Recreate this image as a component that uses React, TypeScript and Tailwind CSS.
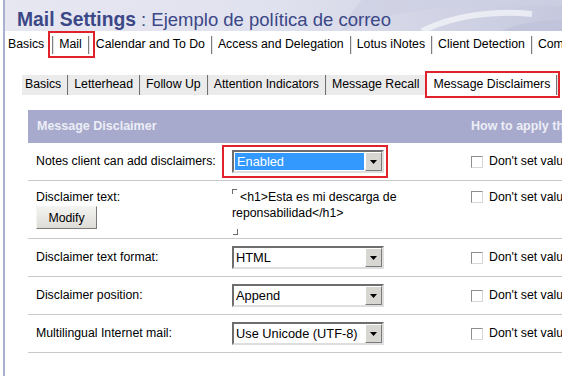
import React from "react";

const Sep = ({ tall }: { tall?: boolean }) => (
  <span
    className={
      tall
        ? "h-[20px] w-[2px] shrink-0 border-l border-[#6f6f6f] bg-[#e4e4e4]"
        : "h-[18px] w-[2px] shrink-0 border-l border-[#7d7d7d] bg-[#e4e4e4]"
    }
  />
);

const Arrow = () => (
  <svg width="7" height="4" viewBox="0 0 7 4">
    <path d="M0 0h7L3.5 4z" fill="#000" />
  </svg>
);

const Select = ({ value, focused }: { value: string; focused?: boolean }) => (
  <div className="flex h-[23px] w-[152px] border-2 border-t-[#6e6e6e] border-l-[#6e6e6e] border-b-[#dedede] border-r-[#dedede] bg-white">
    <div className="flex min-w-0 flex-1 items-center p-px">
      {focused ? (
        <span className="flex h-full w-full items-center bg-[#3399ff] pl-[2px] text-white">{value}</span>
      ) : (
        <span className="pl-px">{value}</span>
      )}
    </div>
    <div className="flex w-[17px] items-center justify-center border border-t-white border-l-white border-b-[#7a7a7a] border-r-[#7a7a7a] bg-[#d8d6d0]">
      <Arrow />
    </div>
  </div>
);

const Check = ({ text }: { text: string }) => (
  <div className="flex items-center whitespace-nowrap">
    <span className="h-[12px] w-[12px] shrink-0 border border-t-[#8e8e8e] border-l-[#8e8e8e] border-b-[#d6d6d6] border-r-[#d6d6d6] bg-white" />
    <span className="ml-[6px]">{text}</span>
  </div>
);

const topTabs = ["Calendar and To Do", "Access and Delegation", "Lotus iNotes", "Client Detection", "Comments"];
const subTabs = ["Letterhead", "Follow Up", "Attention Indicators", "Message Recall"];

const simpleRows = [
  { label: "Disclaimer text format:", value: "HTML" },
  { label: "Disclaimer position:", value: "Append" },
  { label: "Multilingual Internet mail:", value: "Use Unicode (UTF-8)" },
];

export default function App() {
  return (
    <div className="h-[376px] w-[562px] overflow-hidden bg-white font-['Liberation_Sans',Arial,sans-serif] text-[12.3px] text-black">
      <div className="ml-[3px] h-full border-l-2 border-[#aab1cf]">
        {/* title band */}
        <div className="relative flex h-[31px] items-end overflow-hidden bg-gradient-to-r from-[#e6e7f1] via-[#e0e1ee] to-[#c6c9de] pb-[2px] pl-[12px] leading-none text-[#3b4786]">
          <svg className="absolute right-0 top-0" width="260" height="31" viewBox="0 0 260 31">
            <path d="M40 31C90 10 150 2 260 6V0H60C50 10 45 20 40 31z" fill="#cdd0e3" opacity="0.7" />
            <path d="M120 31C150 16 190 10 230 14" stroke="#f1f2f8" strokeWidth="6" fill="none" opacity="0.8" />
            <path d="M200 31C215 24 235 20 260 20V31z" fill="#bfc2d9" opacity="0.8" />
          </svg>
          <span className="relative whitespace-nowrap">
            <span className="text-[19.3px] font-bold">Mail Settings</span>
            <span className="text-[18.5px]"> : Ejemplo de política de correo</span>
          </span>
        </div>

        {/* top tabs */}
        <div className="flex h-[27px] items-center whitespace-nowrap pl-[3px]">
          <span>Basics</span>
          <span className="ml-[4px] flex h-full items-center border-2 border-[#e0232b] pl-[2px] pr-[3px]">
            <Sep />
            <span className="ml-[5px] mr-[6px]">Mail</span>
            <Sep />
          </span>
          {topTabs.map((t, i) => (
            <React.Fragment key={t}>
              {i > 0 && (
                <span className="ml-[6px] mr-[5px] flex">
                  <Sep />
                </span>
              )}
              <span className={i === 0 ? "ml-px" : ""}>{t}</span>
            </React.Fragment>
          ))}
        </div>

        {/* sub tabs */}
        <div className="mt-[13px] flex h-[27px] items-center whitespace-nowrap pl-[17px]">
          <div className="flex h-[20px] items-center bg-[#ebebeb] pl-[3px] pr-[6px]">
            <span>Basics</span>
            {subTabs.map((t) => (
              <React.Fragment key={t}>
                <span className="ml-[6px] mr-[5px] flex">
                  <Sep tall />
                </span>
                <span>{t}</span>
              </React.Fragment>
            ))}
          </div>
          <div className="flex h-full items-center border-2 border-[#e0232b] bg-white pl-[6px]">
            <span>Message Disclaimers</span>
            <span className="ml-[6px] flex">
              <Sep tall />
            </span>
          </div>
        </div>

        {/* table */}
        <div className="ml-[23px] mt-[12px]">
          <div className="grid h-[33px] grid-cols-[204px_239px_1fr] items-center whitespace-nowrap bg-[#a8aacd] text-[12.5px] font-bold text-[#eceef6]">
            <span className="pl-[9px]">Message Disclaimer</span>
            <span />
            <span>How to apply this setting:</span>
          </div>

          <div className="grid h-[38px] grid-cols-[204px_239px_1fr] items-center border-b border-[#c9c9c9]">
            <span className="pl-[8px]">Notes client can add disclaimers:</span>
            <div className="-ml-[10px] w-fit border-2 border-[#e0232b] py-[3px] pl-[8px] pr-[2px] text-[12.8px]">
              <Select value="Enabled" focused />
            </div>
            <Check text="Don't set value" />
          </div>

          <div className="grid h-[58px] grid-cols-[204px_239px_1fr] items-start border-b border-[#c9c9c9] pt-[8px] leading-[16px]">
            <div className="pl-[8px]">
              <div>Disclaimer text:</div>
              <button className="mt-px h-[23px] w-[61px] border border-t-[#f4f4f4] border-l-[#f4f4f4] border-b-[#7b7b7b] border-r-[#7b7b7b] bg-gradient-to-b from-[#f3f3f1] to-[#dedcd6] text-[12.3px]">
                Modify
              </button>
            </div>
            <div>
              <div className="whitespace-nowrap">
                <span className="inline-block h-[5px] w-[5px] border-l border-t border-[#6a6a6a] align-top" />
                <span className="ml-[3px]">&lt;h1&gt;Esta es mi descarga de</span>
              </div>
              <div>reponsabilidad&lt;/h1&gt;</div>
              <div className="flex h-[16px] items-end pb-[2px] pl-px">
                <span className="h-[6px] w-[5px] border-b border-r border-[#6a6a6a]" />
              </div>
            </div>
            <div className="flex h-[16px] items-center">
              <Check text="Don't set value" />
            </div>
          </div>

          {simpleRows.map((r) => (
            <div key={r.label} className="grid h-[38px] grid-cols-[204px_239px_1fr] items-center border-b border-[#c9c9c9]">
              <span className="pl-[8px]">{r.label}</span>
              <div className="text-[12.8px]">
                <Select value={r.value} />
              </div>
              <Check text="Don't set value" />
            </div>
          ))}
        </div>
      </div>
    </div>
  );
}
